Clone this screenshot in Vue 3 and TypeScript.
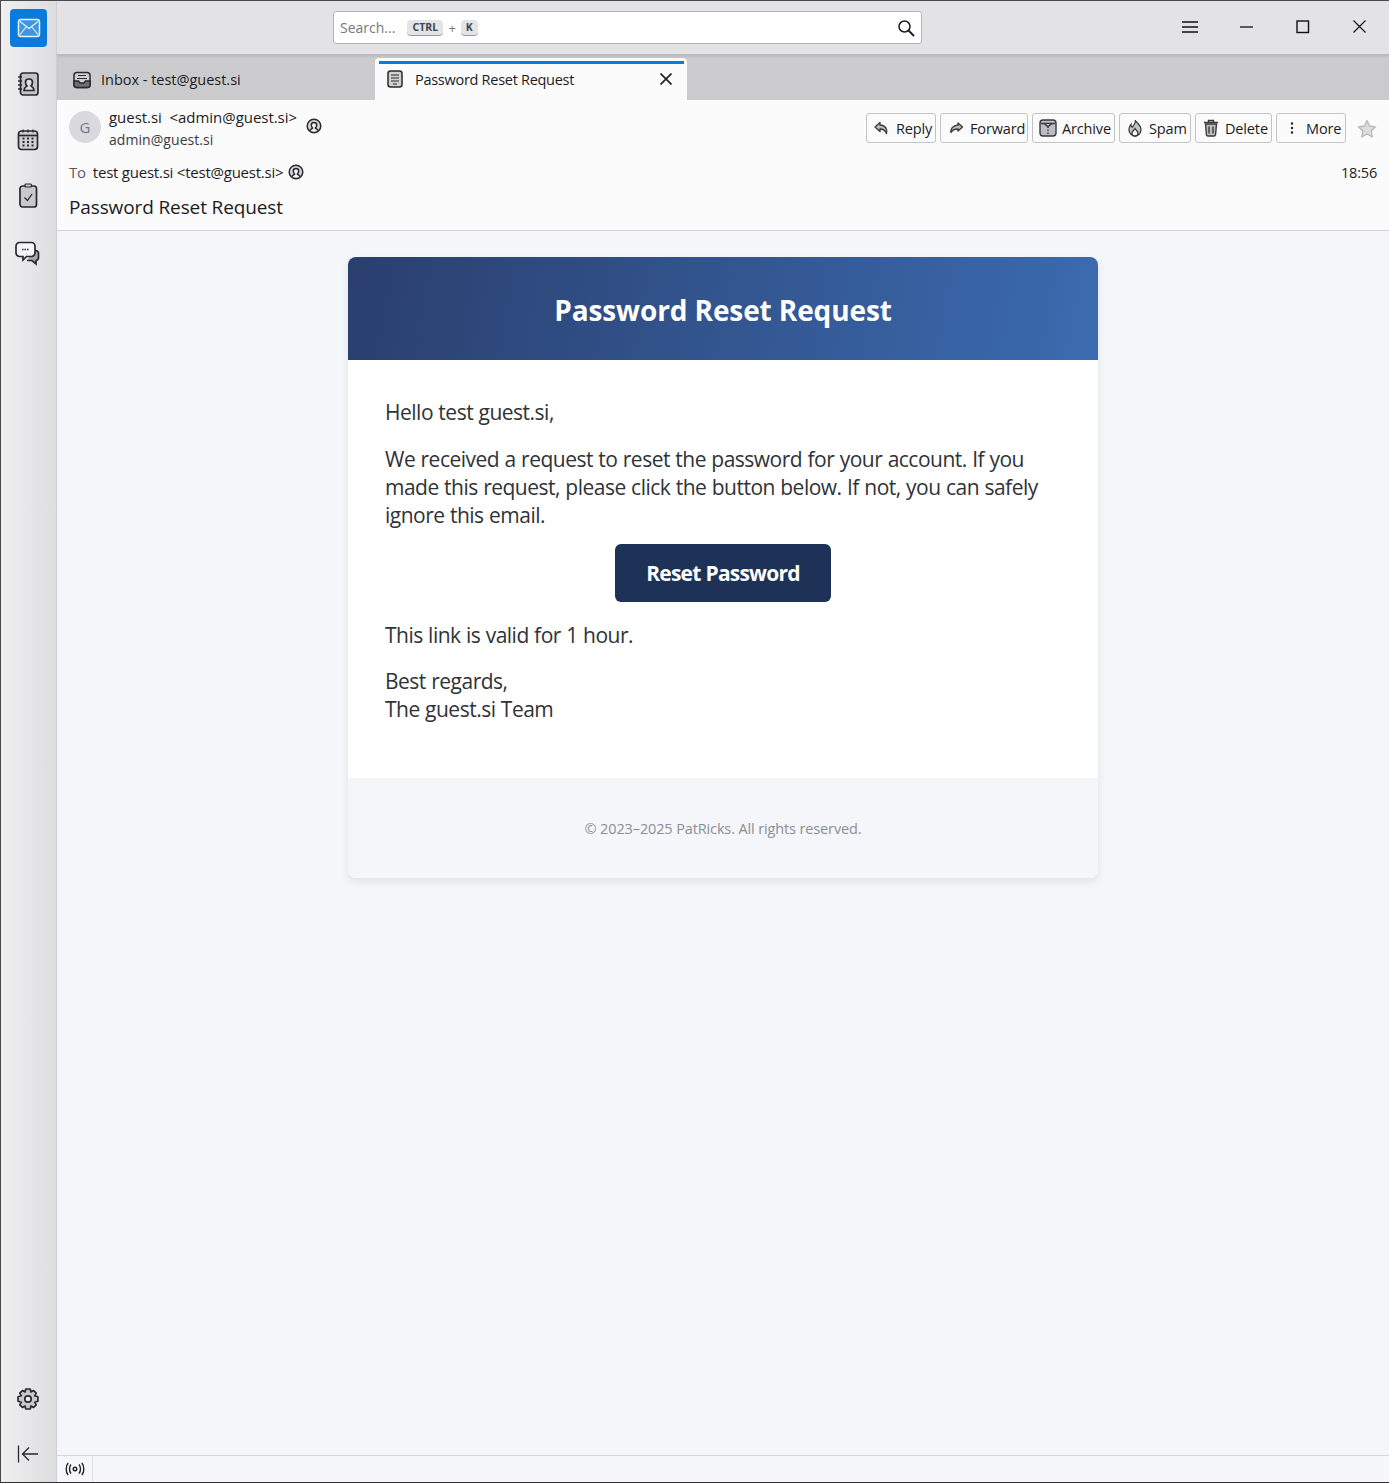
<script setup lang="ts">
const actions = [
  { label: 'Reply', icon: 'reply', w: 70 },
  { label: 'Forward', icon: 'forward', w: 88 },
  { label: 'Archive', icon: 'archive', w: 83 },
  { label: 'Spam', icon: 'spam', w: 72 },
  { label: 'Delete', icon: 'delete', w: 77 },
  { label: 'More', icon: 'more', w: 70 },
]
</script>

<template>
  <div class="app">
    <aside class="rail">
      <div class="rail-top">
        <div class="mail-btn">
          <svg width="24" height="20" viewBox="0 0 24 20" fill="#3f97e4" stroke="#e8f3fc" stroke-width="1.500">
            <rect x="1.500" y="1.500" width="21" height="17" rx="2.500" />
            <path d="M3 3.500 12 10.500 21 3.500M3 16.500 9.500 8.500M21 16.500 14.500 8.500" stroke-width="1.100" fill="none" />
          </svg>
        </div>
        <svg class="rail-ico first" width="24" height="26" viewBox="0 0 24 26" fill="#c4c4c6" stroke="#2a2a2e" stroke-width="1.700">
          <rect x="4.500" y="2" width="17.500" height="22" rx="2.500" />
          <path d="M2 6h4M2 10h4M2 14h4M2 18h4" stroke-width="1.300" />
          <path fill="#dedee0" d="M8 19.500c0-3 2-3.500 3-4.500-1.200-1-1.500-2.500-1.500-4 0-2 1.300-3 3.500-3s3.500 1 3.500 3c0 1.500-.3 3-1.500 4 1 1 3 1.500 3 4.500z" />
        </svg>
        <svg class="rail-ico" width="24" height="24" viewBox="0 0 24 24" fill="none" stroke="#2a2a2e" stroke-width="1.700">
          <rect x="2.500" y="3" width="19" height="18.500" rx="3" fill="#d0d0d2" />
          <path d="M3 7.500h18" />
          <path d="M7 1.500v3M12 1.500v3M17 1.500v3" stroke-width="1.300" />
          <path d="M6.500 10.500h2M11 10.500h2M15.500 10.500h2M6.500 14h2M11 14h2M15.500 14h2M6.500 17.500h2M11 17.500h2M15.500 17.500h2" stroke-width="1.800" />
        </svg>
        <svg class="rail-ico" width="24" height="26" viewBox="0 0 24 26" fill="none" stroke="#2a2a2e" stroke-width="1.700">
          <rect x="4" y="3" width="16.500" height="21" rx="2.500" fill="#c9c9cb" />
          <rect x="9" y="1" width="6.500" height="3" rx="1" fill="#c9c9cb" stroke-width="1.200" />
          <path d="M8.500 14.500 11.500 17.500 16 11" stroke-width="1.300" />
        </svg>
        <svg class="rail-ico chat" width="25" height="25" viewBox="0 0 25 25" fill="none" stroke="#2a2a2e" stroke-width="1.700">
          <path d="M19.500 9.500h1.500a3 3 0 0 1 2.500 3v4a3 3 0 0 1-2.500 3v3.500l-4-3.500h-5" fill="#a8a8aa" />
          <path d="M4.500 1.500h12a3.500 3.500 0 0 1 3.500 3.500v7a3.500 3.500 0 0 1-3.500 3.500h-5l-3.500 3.500v-3.500h-3.500a3.500 3.500 0 0 1-3.500-3.500v-7a3.500 3.500 0 0 1 3.500-3.500z" fill="#f6f6f7" />
          <path d="M7 8.500h6.500" stroke-width="1.300" stroke-dasharray="1.500 1" />
        </svg>
      </div>
      <div class="rail-bottom">
        <svg class="gear" width="24" height="24" viewBox="0 0 24 24" fill="none" stroke="#2a2a2e" stroke-width="1.700">
          <path d="M9.800 2h4.400l.8 3 2.600-1.500 2.600 2.700-1.500 2.600 3.200.9v4.600l-3.200.9 1.500 2.600-2.600 2.700-2.600-1.500-.8 3H9.800l-.8-3-2.600 1.500-2.600-2.700 1.500-2.600L2 14.300V9.700l3.300-.9-1.500-2.600 2.600-2.700L9 5z" stroke-linejoin="round" fill="#c8c8ca" />
          <circle cx="12" cy="12" r="3.200" fill="#eee" />
        </svg>
        <svg class="collapse" width="22" height="20" viewBox="0 0 22 20" fill="none" stroke="#2a2a2e" stroke-width="1.300">
          <path d="M1.500 1.500v17M21 10H6M12 3.500 5.500 10l6.500 6.500" />
        </svg>
      </div>
    </aside>

    <main class="main">
      <header class="titlebar">
        <div class="search">
          <span class="placeholder">Search...</span>
          <kbd class="ctrl">CTRL</kbd>
          <span class="plus">+</span>
          <kbd class="k">K</kbd>
          <svg class="lens" width="18" height="18" viewBox="0 0 18 18" fill="none" stroke="#1a1a1a" stroke-width="1.500">
            <circle cx="7.500" cy="7.500" r="5.500" />
            <path d="M11.500 11.500 17 17" stroke-width="1.800" />
          </svg>
        </div>
        <div class="winbtns">
          <svg width="16" height="12" viewBox="0 0 16 12" stroke="#111" stroke-width="1.400"><path d="M0 1h16M0 6h16M0 11h16" /></svg>
          <svg width="14" height="2" viewBox="0 0 14 2" stroke="#111" stroke-width="1.300"><path d="M0 1h13" /></svg>
          <svg width="14" height="14" viewBox="0 0 14 14" fill="none" stroke="#111" stroke-width="1.400"><rect x="1" y="1" width="11.500" height="11.500" /></svg>
          <svg width="13" height="13" viewBox="0 0 13 13" stroke="#111" stroke-width="1.200"><path d="M.5.500l12 12M12.500.500l-12 12" /></svg>
        </div>
      </header>

      <nav class="tabs">
        <div class="tab inactive">
          <svg width="18" height="18" viewBox="0 0 18 18" fill="none" stroke="#2a2a2e" stroke-width="1.500">
            <rect x="1" y="1.500" width="16" height="15" rx="3" fill="#d0d0d2" />
            <path d="M1 10h4.500l1.500 2h4l1.500-2H17v4a2.500 2.500 0 0 1-2.500 2.500h-11A2.500 2.500 0 0 1 1 14z" fill="#6f6f72" />
            <path d="M4 7.500h10M5 4.500h8" stroke-width="1.200" />
          </svg>
          <span class="inbox-label">Inbox - test@guest.si</span>
        </div>
        <div class="tab active">
          <svg width="16" height="18" viewBox="0 0 16 18" fill="#d0d0d2" stroke="#2a2a2e" stroke-width="1.500">
            <rect x="1" y="1" width="14" height="16" rx="2.500" />
            <path d="M4 5h8M4 8h8M4 11h8M6 14h4" stroke-width="1.200" />
          </svg>
          <span class="tab-label">Password Reset Request</span>
          <svg class="tab-x" width="12" height="12" viewBox="0 0 12 12" stroke="#222" stroke-width="1.700"><path d="M.5.500l11 11M11.500.500l-11 11" /></svg>
        </div>
      </nav>

      <section class="msghead">
        <div class="row-top">
          <div class="avatar">G</div>
          <div class="from">
            <div class="from-name">guest.si &nbsp;&lt;admin@guest.si&gt;</div>
            <div class="from-mail">admin@guest.si</div>
          </div>
          <svg class="contact" width="16" height="16" viewBox="0 0 16 16" fill="#d4d4d6" stroke="#2a2a2e" stroke-width="1.500">
            <circle cx="8" cy="8" r="6.800" />
            <path fill="#f4f4f5" d="M3.800 13c.5-2 2.200-2 2.800-3-1-.8-1.300-1.800-1.300-3 0-1.600 1-2.500 2.700-2.500s2.700.9 2.700 2.500c0 1.200-.3 2.200-1.300 3 .6 1 2.300 1 2.800 3" />
          </svg>
          <div class="actions">
            <button v-for="a in actions" :key="a.label" class="action" :style="{ width: a.w + 'px' }">
              <span class="slot">
                <svg v-if="a.icon === 'reply'" width="16" height="14" viewBox="0 0 16 14" fill="#bdbdbf" stroke="#3a3a3e" stroke-width="1.400"><path d="M6 1.500 1 6l5 4.500V8c3 0 5 .8 6.500 4.500 1-4-.5-8-6.500-8.500z" stroke-linejoin="round"/></svg>
                <svg v-else-if="a.icon === 'forward'" width="15" height="12" viewBox="0 0 14 12" fill="#bdbdbf" stroke="#3a3a3e" stroke-width="1.400"><path d="M8.500 1 13 5l-4.500 4V7C5.500 7 3 7.500 1.500 10.500 1 7 3 3.500 8.500 3z" stroke-linejoin="round"/></svg>
                <svg v-else-if="a.icon === 'archive'" width="18" height="18" viewBox="0 0 18 18" fill="#bdbdbf" stroke="#3a3a3e" stroke-width="1.400"><rect x="1" y="1" width="16" height="16" rx="3"/><path d="M2 4.500h14M5 4.500l4 3 4-3" fill="#fff"/><path d="M9 7.500v8" stroke-dasharray="1.500 1.500" fill="none"/></svg>
                <svg v-else-if="a.icon === 'spam'" width="16" height="18" viewBox="0 0 16 18" fill="none" stroke="#3a3a3e" stroke-width="1.300"><path d="M8.500 1c.5 3 5.500 4.500 5.500 9.500 0 3.500-2.500 6.500-6 6.500s-6-3-6-6.500c0-2.500 1-3.500 2-5 0 1.500.5 2.500 1.500 2.500C6 7 9 5 8.500 1z" fill="#c4c4c6"/><path d="M8 17c-2 0-3-1.500-3-3 0-2 2-2.500 3-4.500 1 2 3 2.500 3 4.500 0 1.500-1 3-3 3z" fill="#fff"/></svg>
                <svg v-else-if="a.icon === 'delete'" width="16" height="18" viewBox="0 0 16 18" fill="#bdbdbf" stroke="#3a3a3e" stroke-width="1.400"><path d="M2.500 5h11l-1 11a1.500 1.500 0 0 1-1.500 1H5a1.500 1.500 0 0 1-1.500-1z"/><path d="M1 3.500h14M5.500 3V1.500h5V3M6 7.500v7M10 7.500v7" fill="none"/></svg>
                <svg v-else width="8" height="12" viewBox="0 0 8 12" fill="#222"><circle cx="4" cy="1.500" r="1.200"/><circle cx="4" cy="6" r="1.200"/><circle cx="4" cy="10.500" r="1.200"/></svg>
              </span>
              <span>{{ a.label }}</span>
            </button>
            <svg class="star" width="20" height="19" viewBox="0 0 20 19" fill="#dcdcde" stroke="#b8b8ba" stroke-width="1.300"><path d="M10 1.500l2.600 5.500 6 .8-4.400 4.200 1.100 6L10 15l-5.300 3 1.100-6L1.400 7.800l6-.8z" stroke-linejoin="round"/></svg>
          </div>
        </div>
        <div class="row-to">
          <span class="to-label">To</span>
          <span class="to-val">test guest.si &lt;test@guest.si&gt;</span>
          <svg width="16" height="16" viewBox="0 0 16 16" fill="#d4d4d6" stroke="#2a2a2e" stroke-width="1.500">
            <circle cx="8" cy="8" r="6.800" />
            <path fill="#f4f4f5" d="M3.800 13c.5-2 2.200-2 2.800-3-1-.8-1.300-1.800-1.300-3 0-1.600 1-2.500 2.700-2.500s2.700.9 2.700 2.500c0 1.200-.3 2.200-1.300 3 .6 1 2.300 1 2.800 3" />
          </svg>
          <span class="time">18:56</span>
        </div>
        <div class="subject">Password Reset Request</div>
      </section>

      <section class="content">
        <article class="card">
          <header class="card-head"><h1>Password Reset Request</h1></header>
          <div class="card-body">
            <p>Hello test guest.si,</p>
            <p>We received a request to reset the password for your account. If you<br />made this request, please click the button below. If not, you can safely<br />ignore this email.</p>
            <div class="cta"><a class="reset">Reset Password</a></div>
            <p>This link is valid for 1 hour.</p>
            <p class="last">Best regards,<br />The guest.si Team</p>
          </div>
          <footer class="card-foot">© 2023–2025 PatRicks. All rights reserved.</footer>
        </article>
      </section>

      <footer class="status">
        <div class="status-cell">
          <svg width="20" height="14" viewBox="0 0 20 14" fill="none" stroke="#222" stroke-width="1.400">
            <circle cx="10" cy="7" r="1.800" />
            <path d="M6 2.500c-2 2.500-2 6.500 0 9M14 2.500c2 2.500 2 6.500 0 9M3.200 1C.5 4 .5 10 3.200 13M16.800 1c2.700 3 2.700 9 0 12" />
          </svg>
        </div>
      </footer>
    </main>
  </div>
</template>

<style>
html, body { margin: 0; padding: 0; background: #f4f6fa; }
</style>

<style scoped>
.app {
  width: 1389px;
  height: 1483px;
  box-sizing: border-box;
  display: flex;
  overflow: hidden;
  border-top: 1px solid #4a4a4d;
  border-left: 1px solid #4a4a4d;
  border-bottom: 1px solid #333;
  font-family: "Open Sans", "Noto Sans", sans-serif;
  color: #1c1c1e;
}
.rail {
  width: 56px;
  flex: none;
  background: linear-gradient(90deg, #f0f0f1, #dddddf);
  border-right: 1px solid #cfcfd2;
  box-sizing: border-box;
  display: flex;
  flex-direction: column;
  justify-content: space-between;
  align-items: center;
  padding: 8px 0 18px;
}
.rail-top, .rail-bottom { display: flex; flex-direction: column; align-items: center; }
.mail-btn {
  width: 37px;
  height: 38px;
  border-radius: 4px;
  background: #0a7bdc;
  display: flex;
  align-items: center;
  justify-content: center;
}
.rail-ico { margin-top: 31px; margin-right: 2px; }
.rail-ico.first { margin-top: 24px; }
.rail-ico.chat { margin-top: 32px; }
.gear { margin-right: 2px; }
.collapse { margin-top: 33px; margin-right: 2px; }
.main { flex: 1; min-width: 0; display: flex; flex-direction: column; }
.titlebar {
  height: 54px;
  flex: none;
  background: #e3e3e5;
  border-bottom: 1px solid #bcbcbe;
  box-sizing: border-box;
  display: flex;
  align-items: center;
}
.search {
  margin-left: 276px;
  width: 589px;
  height: 33px;
  box-sizing: border-box;
  background: #fff;
  border: 1px solid #b5b5b8;
  border-radius: 3px;
  display: flex;
  align-items: center;
  padding: 0 6px;
  font-size: 14px;
}
.placeholder { color: #77787c; }
.ctrl, .k {
  font-family: "Open Sans", sans-serif;
  font-size: 10.5px;
  font-weight: 700;
  color: #3d4556;
  background: #e4e4e6;
  border-radius: 4px;
  border-bottom: 1.5px solid #9a9a9d;
  padding: 0 5px;
  line-height: 15px;
  height: 15px;
}
.ctrl { margin-left: 12px; width: 26px; text-align: center; }
.k { width: 7px; text-align: center; }
.plus { margin: 0 5px; color: #77787c; font-size: 13px; }
.lens { margin-left: auto; }
.winbtns {
  margin-left: auto;
  margin-right: 1px;
  margin-bottom: 2px;
  width: 226px;
  display: grid;
  grid-template-columns: repeat(4, 1fr);
  justify-items: center;
  align-items: center;
}
.tabs {
  height: 45px;
  flex: none;
  background: #cbcbcd;
  box-shadow: inset 0 3px 3px -2px rgba(0, 0, 0, 0.12);
  display: flex;
  align-items: stretch;
  font-size: 14.5px;
  box-sizing: border-box;
}
.tab { display: flex; align-items: center; box-sizing: border-box; }
.tab.inactive { width: 318px; padding: 4px 0 0 16px; gap: 10px; }
.inbox-label { letter-spacing: -0.02px; }
.tab.active {
  width: 312px;
  margin-top: 3px;
  background: #fbfbfc;
  border-radius: 4px 4px 0 0;
  padding: 0 15px 0 12px;
  gap: 12px;
  position: relative;
}
.tab.active::before {
  content: "";
  position: absolute;
  left: 4px;
  right: 3px;
  top: 3px;
  height: 3px;
  background: #0a7bdc;
}
.tab-label { flex: 1; letter-spacing: -0.28px; }
.msghead {
  height: 131px;
  flex: none;
  background: #fbfbfc;
  border-bottom: 1px solid #d4d4d8;
  box-sizing: border-box;
  padding: 0 11px 0 12px;
  display: flex;
  flex-direction: column;
}
.row-top { display: flex; align-items: flex-start; height: 59px; }
.avatar {
  width: 32px;
  height: 32px;
  border-radius: 50%;
  background: #d9d9de;
  color: #74768a;
  font-size: 15px;
  display: flex;
  align-items: center;
  justify-content: center;
  margin-top: 11px;
  flex: none;
}
.from { margin-left: 8px; padding-top: 6px; line-height: 22px; }
.from-name { font-size: 15px; letter-spacing: -0.04px; margin-bottom: 1px; }
.from-mail { font-size: 14px; letter-spacing: 0.06px; color: #3a3a3e; }
.contact { margin: 18px 0 0 9px; }
.actions { margin-left: auto; display: flex; align-items: center; gap: 4px; margin-top: 13px; }
.action {
  height: 30px;
  box-sizing: border-box;
  background: #fbfbfc;
  border: 1px solid #c3c3c6;
  border-radius: 3px;
  display: flex;
  align-items: center;
  gap: 3px;
  padding: 0 0 0 4px;
  font: inherit;
  font-size: 14.5px;
  letter-spacing: -0.15px;
  color: #1c1c1e;
}
.slot { width: 22px; display: flex; justify-content: center; flex: none; }
.star { margin-left: 7px; margin-right: 1px; }
.row-to { display: flex; align-items: center; font-size: 15px; letter-spacing: -0.23px; height: 26px; padding-right: 1px; }
.to-label { color: #5b5b60; margin-right: 7px; }
.to-val { margin-right: 5px; }
.time { margin-left: auto; letter-spacing: -0.2px; font-size: 14.5px; }
.subject { font-size: 19px; letter-spacing: -0.12px; margin-top: 8px; line-height: 28px; }
.content {
  flex: 1;
  background: #f4f6fa;
  padding-top: 26px;
  min-height: 0;
}
.card {
  width: 750px;
  margin-left: 291px;
  background: #fff;
  border-radius: 8px;
  overflow: hidden;
  box-shadow: 0 4px 8px rgba(0, 0, 0, 0.08);
}
.card-head {
  height: 103px;
  box-sizing: border-box;
  padding-top: 2px;
  background: linear-gradient(100deg, #2a3f6e, #3b6bb0);
  display: flex;
  align-items: center;
  justify-content: center;
}
.card-head h1 {
  margin: 0;
  font-size: 28px;
  line-height: 1;
  font-weight: 700;
  letter-spacing: -0.11px;
  color: #fff;
}
.card-body {
  padding: 38px 38px 0 37px;
  height: 418px;
  box-sizing: border-box;
  font-size: 21px;
  line-height: 28px;
  letter-spacing: -0.5px;
  word-spacing: 0.4px;
  color: #2f3337;
}
.card-body p { margin: 0 0 18px; }
.card-body p:first-child { margin-bottom: 19px; }
.cta { display: flex; justify-content: center; margin: -3px 0 19px 1px; }
.reset {
  width: 216px;
  height: 58px;
  border-radius: 6px;
  background: #1e3156;
  color: #fff;
  font-weight: 700;
  font-size: 21px;
  letter-spacing: -0.8px;
  display: flex;
  align-items: center;
  justify-content: center;
}
.card-foot {
  height: 100px;
  background: #f4f6fa;
  display: flex;
  align-items: center;
  justify-content: center;
  font-size: 14.5px;
  letter-spacing: -0.13px;
  color: #8b8e94;
}
.status {
  height: 27px;
  flex: none;
  background: #f6f7fa;
  border-top: 1px solid #d6d6d9;
  box-sizing: border-box;
  display: flex;
}
.status-cell {
  width: 36px;
  box-sizing: border-box;
  border-right: 1px solid #dedee0;
  display: flex;
  align-items: center;
  justify-content: center;
}
</style>
